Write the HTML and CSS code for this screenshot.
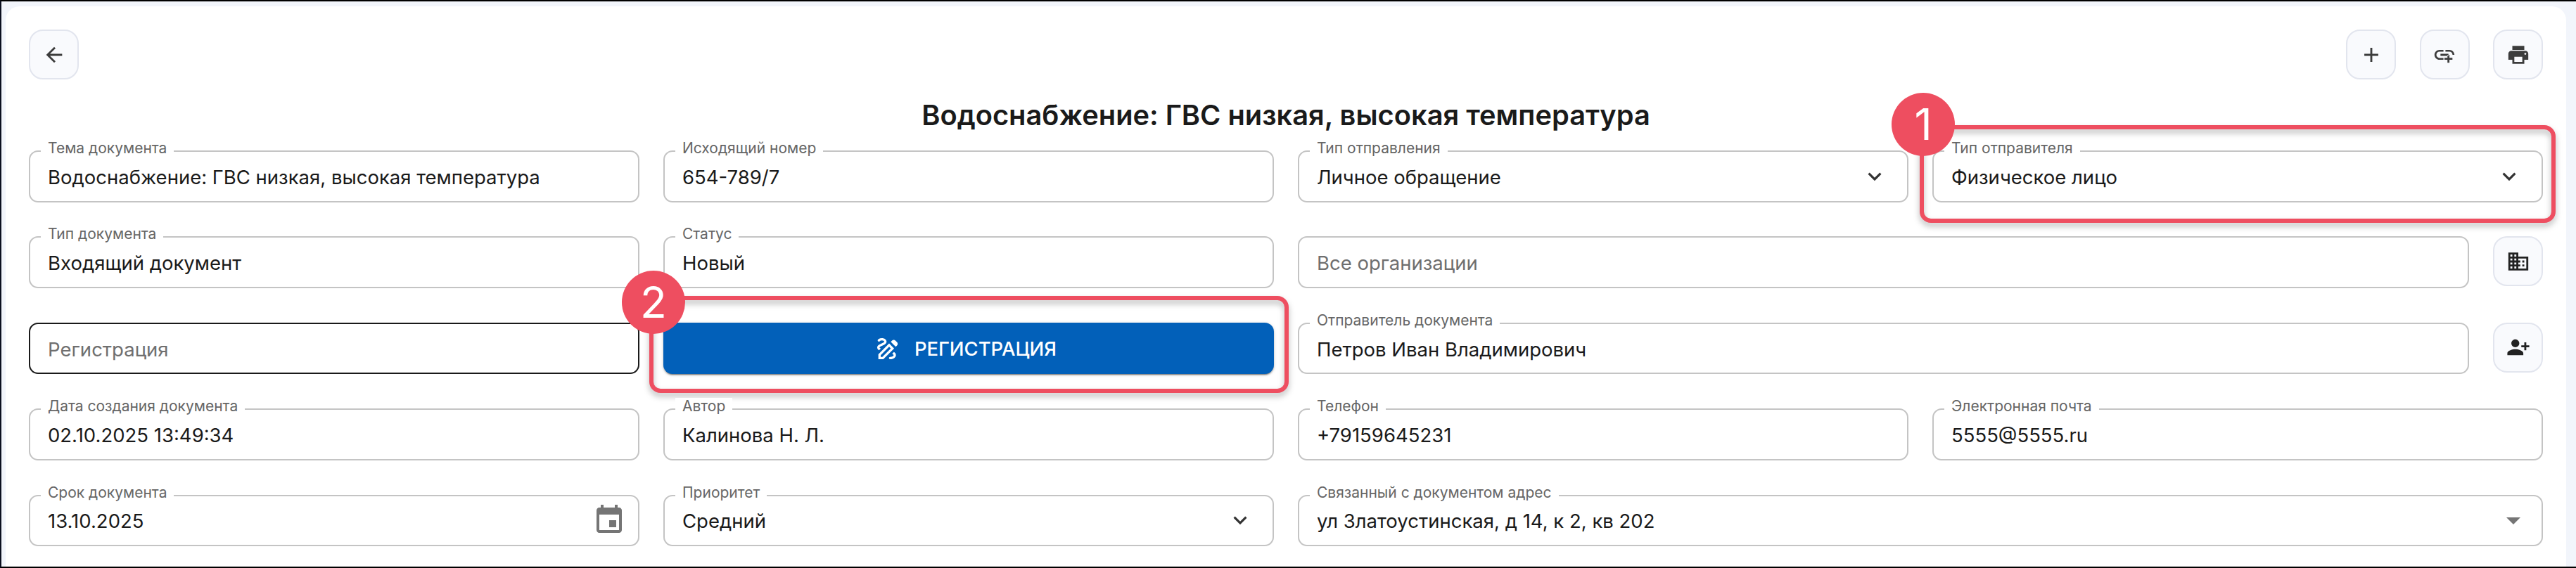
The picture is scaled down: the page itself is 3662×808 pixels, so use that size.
FILE: index.html
```html
<!DOCTYPE html>
<html lang="ru">
<head>
<meta charset="utf-8">
<title>Документ</title>
<link rel="stylesheet" href="styles.css">
</head>
<body>
<div class="frame">
  <main class="card">
    <div class="toolbar">
      <button class="icon-btn"><svg class="ico dark" viewBox="0 0 24 24"><path d="M20 11H7.83l5.59-5.59L12 4l-8 8 8 8 1.41-1.41L7.83 13H20v-2z"/></svg></button>
      <div class="toolbar-right">
        <button class="icon-btn"><svg class="ico dark" viewBox="0 0 24 24"><path d="M19 13h-6v6h-2v-6H5v-2h6V5h2v6h6v2z"/></svg></button>
        <button class="icon-btn"><svg class="ico dark" viewBox="0 0 24 24"><path d="M8 11h8v2H8zm12.1 1H22c0-2.76-2.24-5-5-5h-4v1.9h4c1.71 0 3.1 1.39 3.1 3.1zM3.9 12c0-1.71 1.39-3.1 3.1-3.1h4V7H7c-2.76 0-5 2.24-5 5s2.24 5 5 5h4v-1.9H7c-1.71 0-3.1-1.39-3.1-3.1zM17 12h-2v3h-3v2h3v3h2v-3h3v-2h-3z"/></svg></button>
        <button class="icon-btn"><svg class="ico dark" viewBox="0 0 24 24"><path d="M19 8H5c-1.66 0-3 1.34-3 3v6h4v4h12v-4h4v-6c0-1.66-1.34-3-3-3zm-3 11H8v-5h8v5zm3-7c-.55 0-1-.45-1-1s.45-1 1-1 1 .45 1 1-.45 1-1 1zm-1-9H6v4h12V3z"/></svg></button>
      </div>
    </div>
    <h1 class="title">Водоснабжение: ГВС низкая, высокая температура</h1>
    <div class="form">
      <div class="field"><span class="label">Тема документа</span><span class="value">Водоснабжение: ГВС низкая, высокая температура</span></div>
      <div class="field"><span class="label">Исходящий номер</span><span class="value">654-789/7</span></div>
      <div class="field"><span class="label">Тип отправления</span><span class="value">Личное обращение</span><svg class="chevron" viewBox="0 0 24 24"><path d="M16.59 8.59 12 13.17 7.41 8.59 6 10l6 6 6-6z"/></svg></div>
      <div class="field"><span class="label">Тип отправителя</span><span class="value">Физическое лицо</span><svg class="chevron" viewBox="0 0 24 24"><path d="M16.59 8.59 12 13.17 7.41 8.59 6 10l6 6 6-6z"/></svg>
        <div class="callout callout-one"></div><div class="badge badge-one">1</div>
      </div>

      <div class="field"><span class="label">Тип документа</span><span class="value">Входящий документ</span></div>
      <div class="field"><span class="label">Статус</span><span class="value">Новый</span></div>
      <div class="with-action">
        <div class="field grow"><span class="value muted">Все организации</span></div>
        <button class="icon-btn"><svg class="ico black" viewBox="0 0 24 24"><path d="M12 7V3H2v18h20V7H12zM6 19H4v-2h2v2zm0-4H4v-2h2v2zm0-4H4V9h2v2zm0-4H4V5h2v2zm4 12H8v-2h2v2zm0-4H8v-2h2v2zm0-4H8V9h2v2zm0-4H8V5h2v2zm10 12h-8v-2h2v-2h-2v-2h2v-2h-2V9h8v10zm-2-8h-2v2h2v-2zm0 4h-2v2h2v-2z"/></svg></button>
      </div>

      <div class="field focused"><span class="value muted">Регистрация</span></div>
      <div class="register-cell">
        <button class="primary"><svg class="primary-ico" viewBox="0 0 24 24"><path d="M18.85 10.39l1.06-1.06c.78-.78.78-2.05 0-2.83L18.5 5.09c-.78-.78-2.05-.78-2.83 0l-1.06 1.06 4.24 4.24zM14.61 11.81L7.41 19H6v-1.41l7.19-7.19 1.42 1.41m-1.42-4.25L4 16.76V21h4.24l9.19-9.19-4.24-4.25zM19 17.5c0 2.19-2.54 3.5-5 3.5-.55 0-1-.45-1-1s.45-1 1-1c1.54 0 3-.73 3-1.5 0-.47-.48-.87-1.23-1.2l1.48-1.48c1.07.63 1.75 1.47 1.75 2.68zM4.58 13.35C3.61 12.79 3 12.06 3 11c0-1.8 1.89-2.63 3.56-3.36C7.59 7.18 9 6.56 9 6c0-.41-.78-1-2-1-1.26 0-1.8.61-1.83.64-.35.41-.98.46-1.4.12-.41-.34-.49-.95-.15-1.38C3.73 4.24 4.76 3 7 3s4 1.32 4 3c0 1.87-1.93 2.72-3.64 3.47C6.42 9.88 5 10.5 5 11c0 .31.43.6 1.07.86l-1.49 1.49z"/></svg>Регистрация</button>
        <div class="callout callout-two"></div><div class="badge badge-two">2</div>
      </div>
      <div class="with-action">
        <div class="field grow"><span class="label">Отправитель документа</span><span class="value">Петров Иван Владимирович</span></div>
        <button class="icon-btn"><svg class="ico black" viewBox="0 0 24 24"><path transform="translate(24 0) scale(-1 1)" d="M15 12c2.21 0 4-1.79 4-4s-1.79-4-4-4-4 1.79-4 4 1.79 4 4 4zm-9-2V7H4v3H1v2h3v3h2v-3h3v-2H6zm9 4c-2.67 0-8 1.34-8 4v2h16v-2c0-2.66-5.33-4-8-4z"/></svg></button>
      </div>

      <div class="field"><span class="label">Дата создания документа</span><span class="value">02.10.2025 13:49:34</span></div>
      <div class="field"><span class="label">Автор</span><span class="value">Калинова Н. Л.</span></div>
      <div class="field"><span class="label">Телефон</span><span class="value">+79159645231</span></div>
      <div class="field"><span class="label">Электронная почта</span><span class="value">5555@5555.ru</span></div>

      <div class="field"><span class="label">Срок документа</span><span class="value">13.10.2025</span><svg class="calendar" viewBox="0 0 24 24"><path d="M17 12h-5v5h5v-5zM16 1v2H8V1H6v2H5c-1.11 0-1.99.9-1.99 2L3 19c0 1.1.89 2 2 2h14c1.1 0 2-.9 2-2V5c0-1.1-.9-2-2-2h-1V1h-2zm3 18H5V8h14v11z"/></svg></div>
      <div class="field"><span class="label">Приоритет</span><span class="value">Средний</span><svg class="chevron" viewBox="0 0 24 24"><path d="M16.59 8.59 12 13.17 7.41 8.59 6 10l6 6 6-6z"/></svg></div>
      <div class="field wide"><span class="label">Связанный с документом адрес</span><span class="value">ул Златоустинская, д 14, к 2, кв 202</span><svg class="caret" viewBox="0 0 24 24"><path d="M7 10l5 5 5-5z"/></svg></div>
    </div>
  </main>
</div>
</body>
</html>
```
FILE: styles.css
```css
* { box-sizing: border-box; }
html, body { margin: 0; padding: 0; }
body { font-family: Inter, "Noto Sans", sans-serif; color: #1a1a1a; background: #000; }

.frame {
  height: 808px;
  border-top: 2px solid #000;
  border-bottom: 2px solid #000;
  border-left: 2px solid #0c1020;
  background: #f2f5fb;
  padding: 7px 14px 0 6px;
  display: flex;
  overflow: hidden;
}
.card {
  flex: 1;
  background: #fff;
  border-radius: 20px 20px 0 0;
  padding: 33px 33px 0;
}

.toolbar { display: flex; justify-content: space-between; }
.toolbar-right { display: flex; gap: 33.5px; }

.icon-btn {
  flex: none;
  width: 71px;
  height: 71px;
  border: 2px solid #e2e5ee;
  border-radius: 20px;
  background: #f9fafd;
  padding: 0;
  display: flex;
  align-items: center;
  justify-content: center;
}
.ico { width: 34px; height: 34px; display: block; }
.ico.dark { fill: #3c3c3c; }
.ico.black { fill: #222; }

.title {
  margin: 29px 0 28px;
  font-size: 39.8px;
  line-height: 44px;
  font-weight: 600;
  text-align: center;
  color: #1a1a1a;
}

.form {
  display: grid;
  grid-template-columns: repeat(4, minmax(0, 1fr));
  grid-auto-rows: 73.6px;
  column-gap: 34px;
  row-gap: 48.8px;
}

.field {
  position: relative;
  display: flex;
  align-items: center;
  border: 2px solid #c4c4c4;
  border-radius: 13px;
  padding: 0 25px;
  min-width: 0;
}
.field.focused { border-color: #1a1a1a; }
.field.wide { grid-column: span 2; }
.field.grow { flex: 1; }

.label {
  position: absolute;
  top: -17px;
  left: 15px;
  padding: 0 10px;
  background: #fff;
  font-size: 21px;
  line-height: 23px;
  color: #666;
  white-space: nowrap;
}
.value {
  flex: 1;
  font-size: 27.5px;
  line-height: 32px;
  padding-top: 2px;
  color: #1a1a1a;
  white-space: nowrap;
}
.value.muted { color: #6f6f6f; }

.chevron { flex: none; width: 38px; height: 38px; margin-right: 2px; fill: #333; }
.calendar { flex: none; width: 48px; height: 48px; margin-right: -8px; fill: #757575; }
.caret { flex: none; width: 48px; height: 48px; margin-right: -9px; fill: #757575; }

.with-action { grid-column: span 2; display: flex; gap: 34px; }

.register-cell { position: relative; display: flex; }
.primary {
  flex: 1;
  display: flex;
  align-items: center;
  justify-content: center;
  gap: 18px;
  border: 0;
  border-radius: 13px;
  background: #0260b9;
  color: #fff;
  font: 500 27.4px/32px Inter, "Noto Sans", sans-serif;
  text-transform: uppercase;
  box-shadow: 0 3px 1px -2px rgba(0,0,0,.3), 0 2px 2px rgba(0,0,0,.2), 0 1px 5px rgba(0,0,0,.15);
  padding: 0;
}
.primary-ico { width: 40px; height: 40px; fill: #fff; margin-left: -10px; }

.callout {
  position: absolute;
  border: 6px solid #ee4e60;
  border-radius: 16px;
  filter: drop-shadow(0 5px 4px rgba(0,0,0,.28));
  pointer-events: none;
}
.callout-one { top: -38px; left: -20px; right: -20px; bottom: -31px; }
.callout-two { top: -38px; left: -20px; right: -21px; bottom: -27px; }

.badge {
  position: absolute;
  width: 90px;
  height: 90px;
  border-radius: 50%;
  background: #ee4e60;
  color: #fff;
  font-size: 62px;
  line-height: 90px;
  text-align: center;
}
.badge-one { top: -84px; left: -60px; }
.badge-two { top: -74px; left: -59px; }
```
